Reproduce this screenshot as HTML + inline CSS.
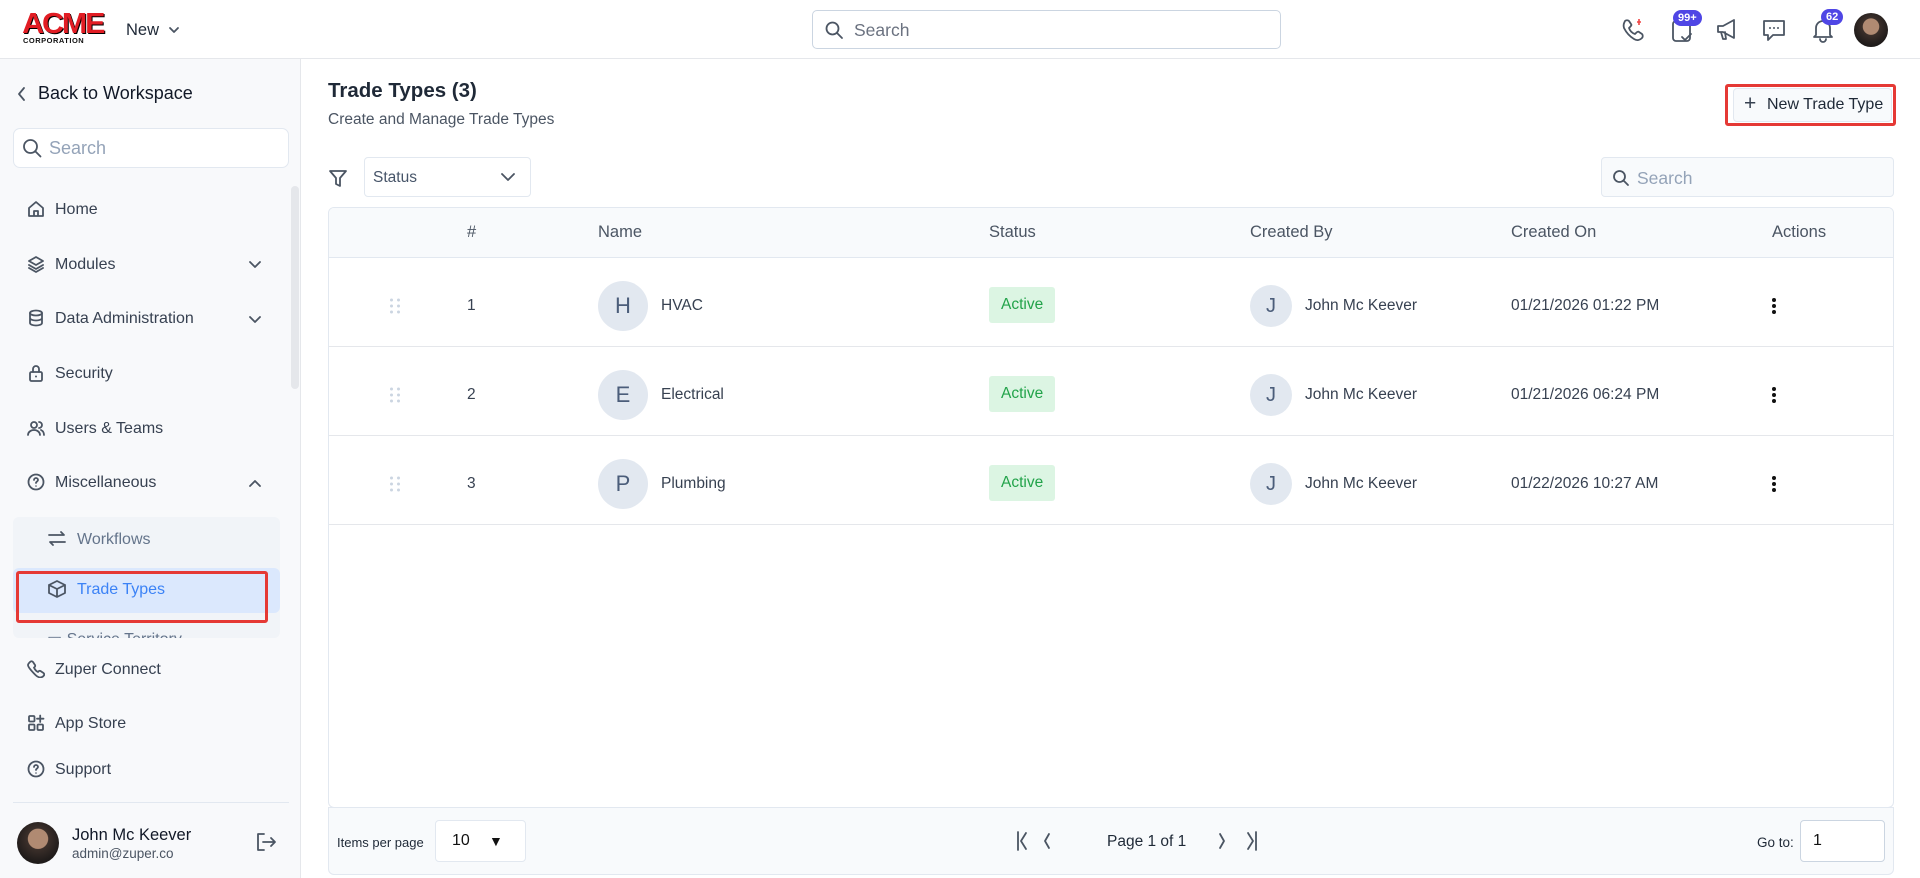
<!DOCTYPE html>
<html><head><meta charset="utf-8"><style>
*{box-sizing:border-box;margin:0;padding:0}
body{width:1920px;height:878px;overflow:hidden;font-family:"Liberation Sans",sans-serif;background:#fff;color:#1f2937;position:relative}
.a{position:absolute}
svg{display:block}
.ic{fill:none;stroke:#4b5563;stroke-width:1.8;stroke-linecap:round;stroke-linejoin:round}
.nav{position:absolute;left:27px;display:flex;align-items:center;font-size:16px;color:#374151;line-height:20px}
.nav svg{margin-right:10px;margin-top:-2px}
.th{position:absolute;top:223px;font-size:16.5px;color:#4b5563}
.row{position:absolute;left:329px;width:1564px;height:89px;border-bottom:1px solid #e5e7eb}
.c{position:absolute;font-size:15.5px;color:#374151;top:50%;transform:translateY(-50%)}
.av{width:50px;height:50px;border-radius:50%;background:#e2e8f0;color:#4b5d7a;font-size:22px;display:flex;align-items:center;justify-content:center}
.av2{width:42px;height:42px;border-radius:50%;background:#e2e8f0;color:#4b5d7a;font-size:20px;display:flex;align-items:center;justify-content:center}
.badge{background:#dcf5e3;color:#22a34a;font-size:15.5px;padding:9px 12px;border-radius:3px}
.dots{width:4px}
.dots i{display:block;width:4px;height:4px;border-radius:50%;background:#111;margin:2px 0}
.grip{display:grid;grid-template-columns:4px 4px;gap:3px}
.grip i{width:3px;height:3px;background:#cbd5e1;border-radius:50%}
.badgeN{position:absolute;background:#4f46e5;color:#fff;font-size:11px;font-weight:bold;border-radius:9px;padding:2px 5px}
</style></head><body>
<div class="a" style="left:0;top:0;width:1920px;height:59px;border-bottom:1px solid #e5e7eb;background:#fff"></div>
<div class="a" style="left:24px;top:10px;font-family:'Liberation Sans';font-weight:900;font-size:29px;color:#e11d24;letter-spacing:-2px;line-height:28px;transform:scaleX(1.05);text-shadow:1px 1px 0 #000">ACME</div>
<div class="a" style="left:23px;top:36px;font-size:7.5px;font-weight:900;letter-spacing:0.5px;color:#111">CORPORATION</div>
<div class="a" style="left:126px;top:21px;font-size:16.5px;color:#1f2937">New</div>
<svg class="a" style="left:168px;top:25px" width="12" height="10"><path d="M2 3l4 4 4-4" class="ic" stroke="#374151"/></svg>
<div class="a" style="left:812px;top:10px;width:469px;height:39px;border:1px solid #cbd5e1;border-radius:5px"></div>
<svg class="a" style="left:824px;top:20px" width="20" height="20"><circle cx="8.5" cy="8.5" r="6" class="ic" stroke="#64748b"/><path d="M13 13l5 5" class="ic" stroke="#64748b"/></svg>
<div class="a" style="left:854px;top:20px;font-size:17.5px;color:#6b7280">Search</div>
<svg class="a" style="left:1620px;top:16px" width="28" height="28"><path d="M5 5c1-1 3-1 4 0l2 3c1 1 0 2-1 3l-1 1c1 3 3 5 6 6l1-1c1-1 2-2 3-1l3 2c1 1 1 3 0 4-2 2-5 3-8 1-5-3-8-7-10-11-1-3 0-5 1-7z" class="ic" stroke="#4b5563"/><path d="M19 3v6M17 6h4" stroke="#ef4444" stroke-width="1.6"/></svg>
<svg class="a" style="left:1670px;top:17px" width="26" height="28"><rect x="3" y="4" width="17" height="20" rx="3" class="ic"/><path d="M12 20l3 3 6-6" class="ic"/></svg>
<div class="badgeN" style="left:1673px;top:10px">99+</div>
<svg class="a" style="left:1714px;top:16px" width="28" height="28"><path d="M4 10h5l11-6v18l-11-6H4z M7 16l2 7h3l-1-7" class="ic"/></svg>
<svg class="a" style="left:1760px;top:16px" width="28" height="28"><path d="M4 5h20v14H13l-5 5v-5H4z" class="ic"/><circle cx="10" cy="12" r="1" fill="#4b5563"/><circle cx="14" cy="12" r="1" fill="#4b5563"/><circle cx="18" cy="12" r="1" fill="#4b5563"/></svg>
<svg class="a" style="left:1809px;top:16px" width="28" height="28"><path d="M7 19V12a7 7 0 0114 0v7l2 2H5z M11 23a3 3 0 006 0" class="ic"/></svg>
<div class="badgeN" style="left:1821px;top:9px">62</div>
<div class="a" style="left:1854px;top:13px;width:34px;height:34px;border-radius:50%;background:radial-gradient(circle at 50% 40%,#b08a72 0 30%,#3b2f2a 32%,#1f1b1a 70%)"></div>
<div class="a" style="left:0;top:59px;width:301px;height:819px;background:#f8f9fb;border-right:1px solid #e5e7eb"></div>
<svg class="a" style="left:16px;top:86px" width="12" height="16"><path d="M8 2L3 8l5 6" class="ic" stroke="#111" stroke-width="2"/></svg>
<div class="a" style="left:38px;top:83px;font-size:18px;color:#111827">Back to Workspace</div>
<div class="a" style="left:13px;top:128px;width:276px;height:40px;border:1px solid #e2e8f0;border-radius:7px;background:#fff"></div>
<svg class="a" style="left:22px;top:138px" width="20" height="20"><circle cx="8.5" cy="8.5" r="6.5" class="ic" stroke="#94a3b8"/><path d="M13.5 13.5l5 5" class="ic" stroke="#94a3b8"/></svg>
<div class="a" style="left:49px;top:138px;font-size:18px;color:#94a3b8">Search</div>
<div class="a" style="left:291px;top:186px;width:8px;height:203px;border-radius:4px;background:#e5e7eb"></div>
<div class="nav" style="top:200px"><svg width="18" height="18"><path d="M2 8l7-6 7 6v8H2z M7 16v-5h4v5" class="ic"/></svg>Home</div>
<div class="nav" style="top:255px"><svg width="18" height="18"><path d="M9 2l7 4-7 4-7-4z M2 10l7 4 7-4 M2 13l7 4 7-4" class="ic"/></svg>Modules</div>
<svg class="a" style="left:248px;top:260px" width="14" height="10"><path d="M2 2l5 5 5-5" class="ic"/></svg>
<div class="nav" style="top:309px"><svg width="18" height="18"><ellipse cx="9" cy="4" rx="6" ry="2.5" class="ic"/><path d="M3 4v10c0 1.5 3 2.5 6 2.5s6-1 6-2.5V4 M3 9c0 1.5 3 2.5 6 2.5s6-1 6-2.5" class="ic"/></svg>Data Administration</div>
<svg class="a" style="left:248px;top:315px" width="14" height="10"><path d="M2 2l5 5 5-5" class="ic"/></svg>
<div class="nav" style="top:364px"><svg width="18" height="18"><rect x="3" y="8" width="12" height="9" rx="1.5" class="ic"/><path d="M6 8V5a3 3 0 016 0v3" class="ic"/><circle cx="9" cy="12.5" r="1" fill="#4b5563"/></svg>Security</div>
<div class="nav" style="top:419px"><svg width="18" height="18"><circle cx="7" cy="6" r="3" class="ic"/><path d="M1 16c0-3 3-5 6-5s6 2 6 5 M12 3a3 3 0 010 6 M14 11c2 1 3 3 3 5" class="ic"/></svg>Users &amp; Teams</div>
<div class="nav" style="top:473px"><svg width="18" height="18"><circle cx="9" cy="9" r="7.5" class="ic"/><path d="M7 7a2 2 0 114 0c0 1.5-2 1.5-2 3" class="ic"/><circle cx="9" cy="13" r=".8" fill="#4b5563"/></svg>Miscellaneous</div>
<svg class="a" style="left:248px;top:478px" width="14" height="10"><path d="M2 8l5-5 5 5" class="ic"/></svg>
<div class="a" style="left:13px;top:517px;width:267px;height:121px;background:#f1f4f8;border-radius:6px;overflow:hidden">
  <div class="a" style="left:0;top:51px;width:267px;height:45px;background:#dbe8fd;border-radius:6px"></div>
  <div class="nav" style="left:34px;top:13px;color:#64748b"><svg width="20" height="18"><path d="M2 5h15l-3-3 M18 12H3l3 3" class="ic" stroke="#64748b"/></svg>Workflows</div>
  <div class="nav" style="left:34px;top:63px;color:#3b82f6"><svg width="20" height="18"><path d="M10 1l8 4v8l-8 4-8-4V5z M2 5l8 4 8-4 M10 9v8" class="ic" stroke="#3b82f6"/></svg>Trade Types</div>
  <div class="nav" style="left:34px;top:113px;color:#64748b">▭ Service Territory</div>
</div>
<div class="a" style="left:16px;top:571px;width:252px;height:52px;border:3px solid #e53935;border-radius:3px"></div>
<div class="nav" style="top:660px"><svg width="18" height="18"><path d="M3 2c1-1 2-1 3 0l2 3c.5 1 0 2-1 2.5C8 10 9 11 11 12c.5-1 1.5-1.5 2.5-1l3 2c1 1 1 2 0 3-2 2-5 2-8-1S1 7 1 5c0-1 1-2 2-3z" class="ic"/></svg>Zuper Connect</div>
<div class="nav" style="top:714px"><svg width="18" height="18"><rect x="2" y="2" width="5.5" height="5.5" rx="1" class="ic"/><rect x="2" y="10.5" width="5.5" height="5.5" rx="1" class="ic"/><rect x="10.5" y="10.5" width="5.5" height="5.5" rx="1" class="ic"/><path d="M13.2 1.5v6.5M10 4.7h6.5" class="ic"/></svg>App Store</div>
<div class="nav" style="top:760px"><svg width="18" height="18"><circle cx="9" cy="9" r="7.5" class="ic"/><path d="M7 7a2 2 0 114 0c0 1.5-2 1.5-2 3" class="ic"/><circle cx="9" cy="13" r=".8" fill="#4b5563"/></svg>Support</div>
<div class="a" style="left:13px;top:802px;width:276px;height:1px;background:#e2e8f0"></div>
<div class="a" style="left:17px;top:822px;width:42px;height:42px;border-radius:50%;background:radial-gradient(circle at 50% 40%,#b08a72 0 30%,#3b2f2a 32%,#1f1b1a 70%)"></div>
<div class="a" style="left:72px;top:826px;font-size:16.5px;color:#111827">John Mc Keever</div>
<div class="a" style="left:72px;top:846px;font-size:13.5px;color:#4b5563">admin@zuper.co</div>
<svg class="a" style="left:254px;top:831px" width="24" height="22"><path d="M10 3H4v16h6 M9 11h12 M17 7l4 4-4 4" class="ic" stroke="#94a3b8"/></svg>
<div class="a" style="left:328px;top:79px;font-size:20.5px;font-weight:bold;color:#1f2937">Trade Types (3)</div>
<div class="a" style="left:328px;top:111px;font-size:15.5px;color:#4b5563">Create and Manage Trade Types</div>
<div class="a" style="left:1733px;top:88px;width:159px;height:34px;border:1px solid #e2e8f0;border-radius:4px;background:#f8fafc"></div>
<div class="a" style="left:1725px;top:84px;width:171px;height:42px;border:3px solid #e53935;border-radius:3px"></div>
<div class="a" style="left:1744px;top:92px;font-size:21px;color:#374151">+</div>
<div class="a" style="left:1767px;top:96px;font-size:16px;color:#1f2937">New Trade Type</div>
<svg class="a" style="left:327px;top:168px" width="22" height="22"><path d="M3 3h16l-6 7v8l-4-2v-6z" class="ic"/></svg>
<div class="a" style="left:364px;top:157px;width:167px;height:40px;border:1px solid #e2e8f0;border-radius:4px;background:#fff"></div>
<div class="a" style="left:373px;top:169px;font-size:15.5px;color:#475569">Status</div>
<svg class="a" style="left:500px;top:171px" width="16" height="12"><path d="M2 3l6 6 6-6" class="ic" stroke="#64748b"/></svg>
<div class="a" style="left:1601px;top:157px;width:293px;height:40px;border:1px solid #e2e8f0;border-radius:4px;background:#f8fafc"></div>
<svg class="a" style="left:1612px;top:169px" width="18" height="18"><circle cx="7.5" cy="7.5" r="5.5" class="ic" stroke="#94a3b8"/><path d="M12 12l4 4" class="ic" stroke="#94a3b8"/></svg>
<div class="a" style="left:1637px;top:168px;font-size:17.5px;color:#94a3b8">Search</div>
<div class="a" style="left:328px;top:207px;width:1566px;height:601px;border:1px solid #e2e8f0;border-radius:6px;overflow:hidden">
 <div class="a" style="left:0;top:0;width:1566px;height:50px;background:#f8fafc;border-bottom:1px solid #e2e8f0"></div>
</div>
<div class="th" style="left:467px">#</div>
<div class="th" style="left:598px">Name</div>
<div class="th" style="left:989px">Status</div>
<div class="th" style="left:1250px">Created By</div>
<div class="th" style="left:1511px">Created On</div>
<div class="th" style="left:1772px">Actions</div>

<div class="row" style="top:258px">
 <div class="c grip" style="left:61px;margin-top:4px"><i></i><i></i><i></i><i></i><i></i><i></i></div>
 <div class="c" style="left:138px;margin-top:4px">1</div>
 <div class="c av" style="left:269px;margin-top:4px">H</div>
 <div class="c" style="left:332px;margin-top:4px">HVAC</div>
 <div class="c badge" style="left:660px;margin-top:3px">Active</div>
 <div class="c av2" style="left:921px;margin-top:4px">J</div>
 <div class="c" style="left:976px;margin-top:4px">John Mc Keever</div>
 <div class="c" style="left:1182px;margin-top:4px">01/21/2026 01:22 PM</div>
 <div class="c dots" style="left:1443px;margin-top:4px"><i></i><i></i><i></i></div>
</div>
<div class="row" style="top:347px">
 <div class="c grip" style="left:61px;margin-top:4px"><i></i><i></i><i></i><i></i><i></i><i></i></div>
 <div class="c" style="left:138px;margin-top:4px">2</div>
 <div class="c av" style="left:269px;margin-top:4px">E</div>
 <div class="c" style="left:332px;margin-top:4px">Electrical</div>
 <div class="c badge" style="left:660px;margin-top:3px">Active</div>
 <div class="c av2" style="left:921px;margin-top:4px">J</div>
 <div class="c" style="left:976px;margin-top:4px">John Mc Keever</div>
 <div class="c" style="left:1182px;margin-top:4px">01/21/2026 06:24 PM</div>
 <div class="c dots" style="left:1443px;margin-top:4px"><i></i><i></i><i></i></div>
</div>
<div class="row" style="top:436px">
 <div class="c grip" style="left:61px;margin-top:4px"><i></i><i></i><i></i><i></i><i></i><i></i></div>
 <div class="c" style="left:138px;margin-top:4px">3</div>
 <div class="c av" style="left:269px;margin-top:4px">P</div>
 <div class="c" style="left:332px;margin-top:4px">Plumbing</div>
 <div class="c badge" style="left:660px;margin-top:3px">Active</div>
 <div class="c av2" style="left:921px;margin-top:4px">J</div>
 <div class="c" style="left:976px;margin-top:4px">John Mc Keever</div>
 <div class="c" style="left:1182px;margin-top:4px">01/22/2026 10:27 AM</div>
 <div class="c dots" style="left:1443px;margin-top:4px"><i></i><i></i><i></i></div>
</div>
<div class="a" style="left:328px;top:807px;width:1566px;height:68px;background:#f8fafc;border:1px solid #e2e8f0;border-radius:0 0 6px 6px"></div>
<div class="a" style="left:337px;top:835px;font-size:13px;color:#1f2937">Items per page</div>
<div class="a" style="left:435px;top:820px;width:91px;height:42px;border:1px solid #e2e8f0;border-radius:4px;background:#fff"></div>
<div class="a" style="left:452px;top:832px;font-size:16px;color:#111">10</div>
<div class="a" style="left:489px;top:833px;font-size:14px;color:#111">▼</div>
<svg class="a" style="left:1016px;top:830px" width="110" height="22"><path d="M2 2v18 M10 3l-5 8 5 8 M33 4l-4 7 4 7" class="ic" stroke="#cbd5e1"/></svg>
<div class="a" style="left:1107px;top:833px;font-size:15.5px;color:#1f2937">Page 1 of 1</div>
<svg class="a" style="left:1212px;top:830px" width="60" height="22"><path d="M8 4l4 7-4 7 M36 3l5 8-5 8 M44 2v18" class="ic" stroke="#cbd5e1"/></svg>
<div class="a" style="left:1757px;top:835px;font-size:13.5px;color:#1f2937">Go to:</div>
<div class="a" style="left:1800px;top:820px;width:85px;height:42px;border:1px solid #cbd5e1;border-radius:4px;background:#fff"></div>
<div class="a" style="left:1813px;top:832px;font-size:16px;color:#111">1</div>
</body></html>
